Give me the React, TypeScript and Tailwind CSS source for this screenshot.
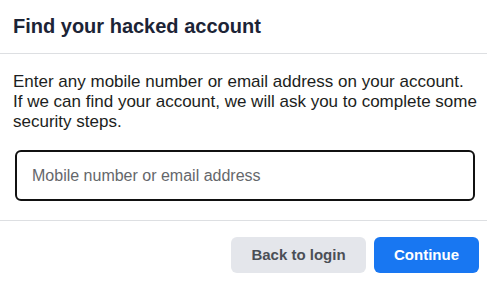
export default function App() {
  return (
    <div className="w-[487px] h-[282px] bg-white overflow-hidden font-['Liberation_Sans',Arial,sans-serif]">
      {/* Header */}
      <div className="h-[54px] border-b border-[#dddfe2] flex items-center px-[13px]">
        <h2 className="text-[20px] font-bold text-[#1c2436] leading-[24px] -mt-[2px]">Find your hacked account</h2>
      </div>

      {/* Body */}
      <div className="pt-[18px] pl-[13px]">
        <p className="text-[17px] leading-[20px] text-[#1c1e21]">
          Enter any mobile number or email address on your account.
          <br />
          If we can find your account, we will ask you to complete some security steps.
        </p>
      </div>
      <div className="pt-[18px] pl-[15px] pr-[12px] pb-[19px] border-b border-[#dddfe2]">
        <input
          autoFocus
          placeholder="Mobile number or email address"
          className="w-full h-[51px] rounded-[6px] border-2 border-[#111] px-[15px] text-[16px] text-[#1c1e21] placeholder:text-[#65676b] outline-none caret-black"
        />
      </div>

      {/* Footer */}
      <div className="flex justify-end gap-[8px] pt-[16px] pr-[8px]">
        <button className="w-[135px] h-[36px] rounded-[6px] bg-[#e4e6eb] text-[#4b4f56] text-[15px] font-bold">Back to login</button>
        <button className="w-[105px] h-[36px] rounded-[6px] bg-[#1877f2] text-white text-[15px] font-bold">Continue</button>
      </div>
    </div>
  );
}
